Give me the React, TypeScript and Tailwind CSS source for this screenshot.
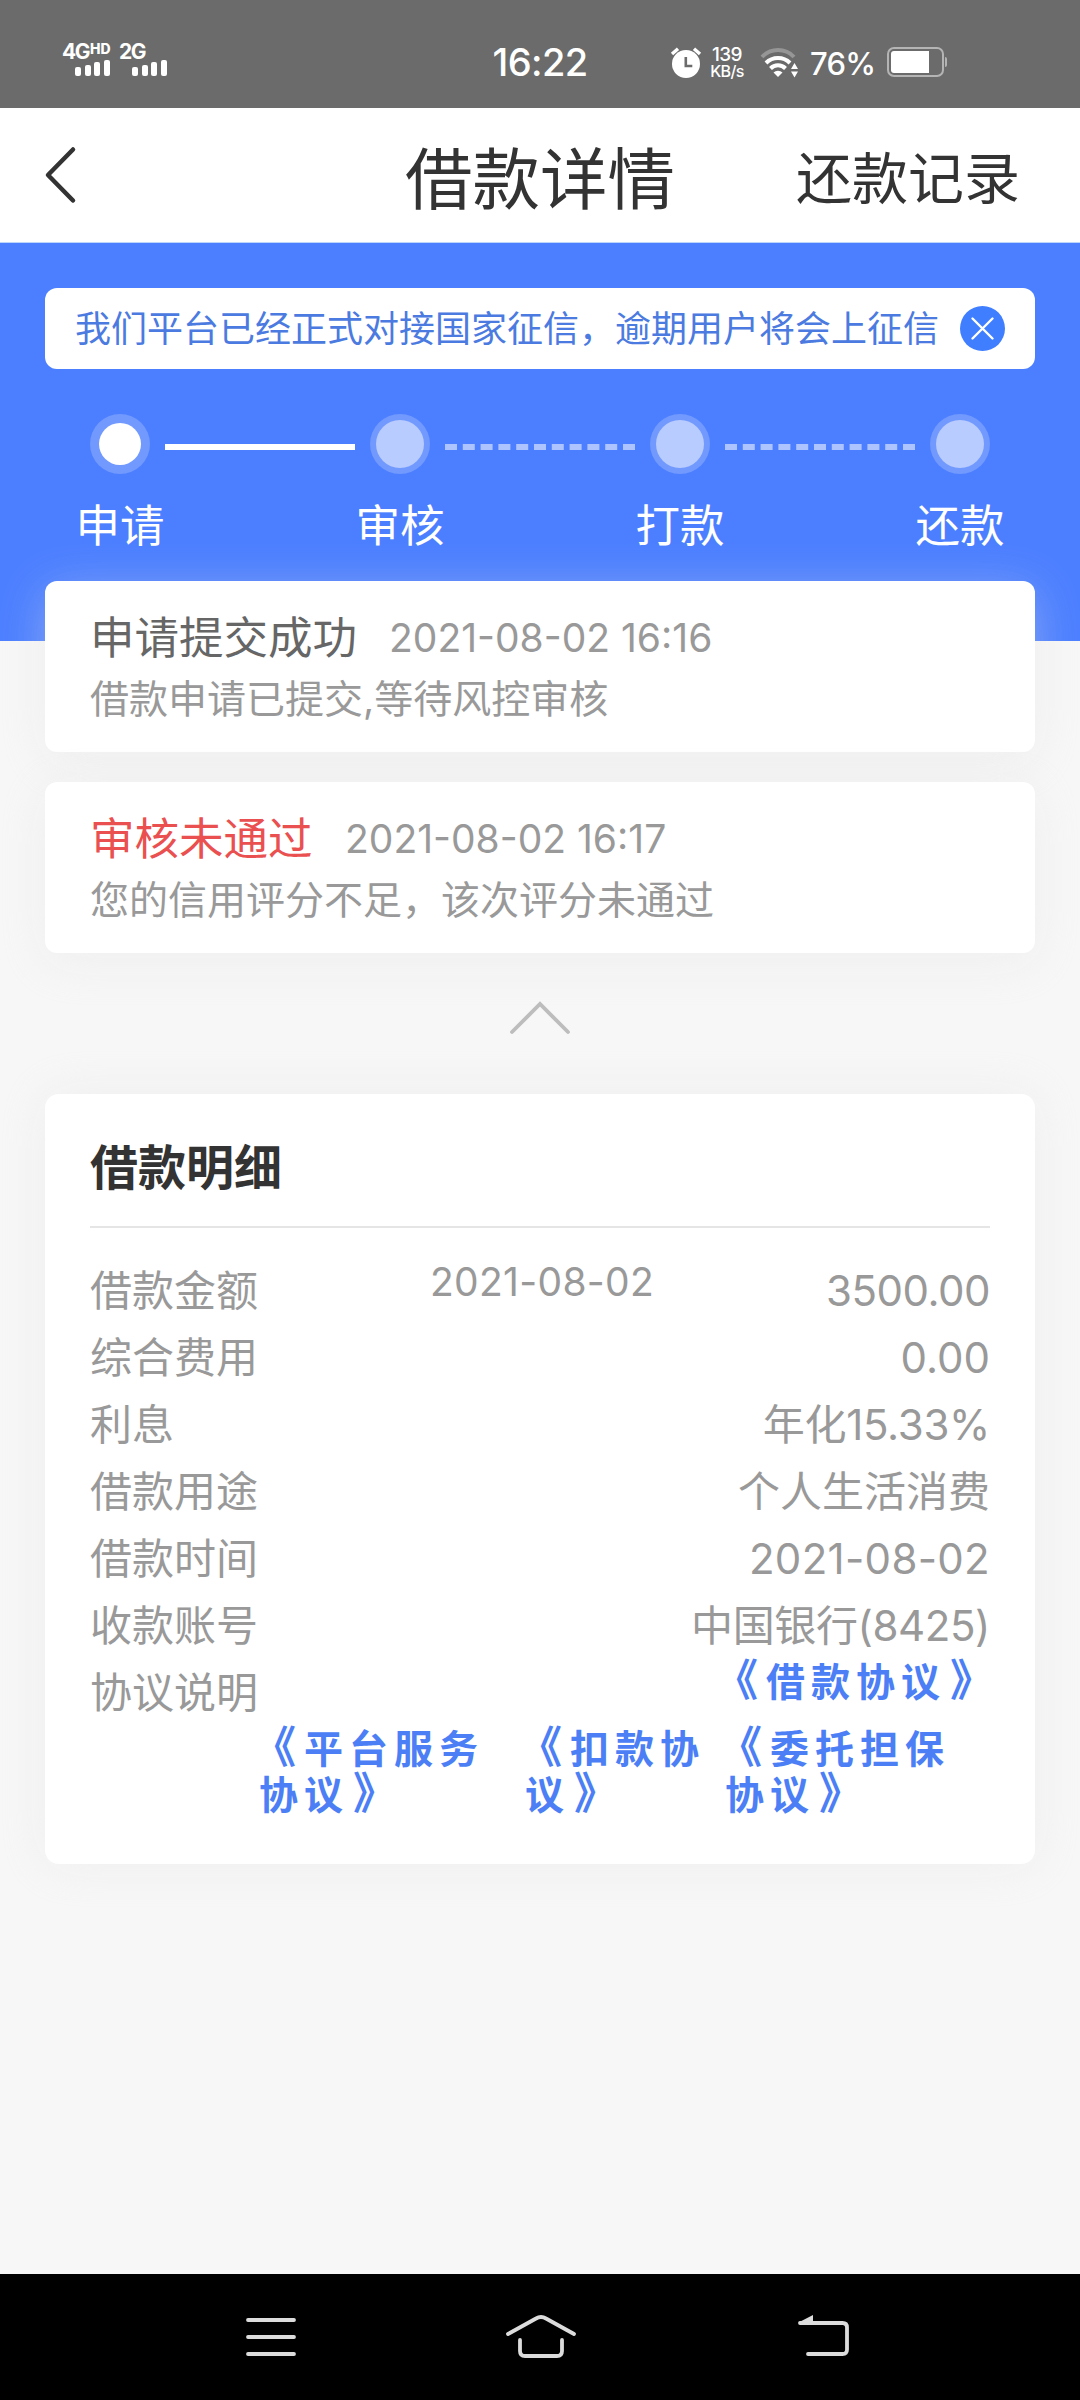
import { Fragment } from "react";

const steps = [
  { label: "申请", done: true },
  { label: "审核", done: false },
  { label: "打款", done: false },
  { label: "还款", done: false },
];

const logs = [
  {
    title: "申请提交成功",
    time: "2021-08-02 16:16",
    text: "借款申请已提交,等待风控审核",
    failed: false,
  },
  {
    title: "审核未通过",
    time: "2021-08-02 16:17",
    text: "您的信用评分不足，该次评分未通过",
    failed: true,
  },
];

const details = [
  { label: "借款金额", value: "3500.00", spacing: "tracking-[-0.5px]" },
  { label: "综合费用", value: "0.00", spacing: "tracking-[0px]" },
  { label: "利息", value: "年化15.33%", spacing: "tracking-[-0.3px]" },
  { label: "借款用途", value: "个人生活消费", spacing: "tracking-[0px]" },
  { label: "借款时间", value: "2021-08-02", spacing: "tracking-[0.3px]" },
  { label: "收款账号", value: "中国银行(8425)", spacing: "tracking-[-0.4px]" },
];

function Signal({ name, hd }: { name: string; hd?: boolean }) {
  return (
    <div className="w-[57px]">
      <div className="flex h-[16px] items-start text-[21px] leading-[16px] font-bold tracking-[-1.5px]">
        {name}
        {hd && (
          <span className="ml-px text-[14px] leading-[10px] font-extrabold tracking-[0px]">
            HD
          </span>
        )}
      </div>
      <div className="ml-[13px] flex h-[16px] w-[35px] items-end justify-between">
        <span className="h-[9px] w-[6px] rounded-[2px] bg-white" />
        <span className="h-[11px] w-[6px] rounded-[2px] bg-white" />
        <span className="h-[14px] w-[6px] rounded-[2px] bg-white" />
        <span className="h-[16px] w-[6px] rounded-[2px] bg-white" />
      </div>
    </div>
  );
}

function StatusBar() {
  return (
    <div className="flex h-[108px] shrink-0 bg-[#6b6b6b] text-white">
      <div className="flex w-[430px] pt-[44px] pl-[62px]">
        <Signal name="4G" hd />
        <Signal name="2G" />
      </div>

      <div className="w-[220px] pt-[40px] text-center text-[38px] leading-[44px] font-medium tracking-[-0.6px]">
        16:22
      </div>

      <div className="flex flex-1 pl-[20px]">
        <svg className="mt-[47px] h-[32px] w-[32px]" viewBox="0 0 32 32">
          <circle cx="16" cy="17" r="14" fill="#fff" />
          <path d="M2 7 8 1.800M30 7 24 1.800" stroke="#fff" strokeWidth="3.4" />
          <path d="M15.8 10v9h6.500" stroke="#6b6b6b" strokeWidth="2.6" fill="none" />
        </svg>

        <div className="mt-[46px] ml-[6px] w-[38px] text-center font-medium">
          <p className="text-[19px] leading-[17px] tracking-[-0.6px]">139</p>
          <p className="text-[16px] leading-[17px] tracking-[-0.6px]">KB/s</p>
        </div>

        <svg className="mt-[47px] ml-[14px] h-[32px] w-[42px]" viewBox="0 0 42 32">
          <g fill="none" stroke="#fff" strokeWidth="4">
            <path d="M2 10a22 22 0 0 1 32 0" stroke="#969696" />
            <path d="M6 16a17 17 0 0 1 24 0" />
            <path d="M10.500 21.500a10.500 10.500 0 0 1 15 0" />
          </g>
          <path d="M13.500 25.500a6.500 6.500 0 0 1 9 0L18 30z" fill="#fff" />
          <path d="M31 22h7L34.500 16zM31 24.500h7L34.500 30.500z" fill="#fff" />
        </svg>

        <span className="mt-[44px] ml-[8px] w-[70px] text-[31px] leading-[40px] font-medium tracking-[-0.8px]">
          76%
        </span>

        <div className="mt-[47px] ml-[7px] flex h-[30px] w-[57px] rounded-[7px] border-2 border-[#b4b4b4] p-[2px]">
          <span className="w-[38px] rounded-l-[3px] bg-white" />
        </div>
        <span className="mt-[57px] ml-px h-[10px] w-[2px] rounded-r-[2px] bg-[#b4b4b4]" />
      </div>
    </div>
  );
}

function Header() {
  return (
    <header className="flex h-[135px] shrink-0 items-center justify-between border-b border-[#bcd6fb] bg-white text-[#333]">
      <div className="w-[284px] pl-[44px]">
        <svg className="h-[58px] w-[34px]" viewBox="0 0 34 58" fill="none">
          <path
            d="M29 3.500 4 29l25 25.500"
            stroke="#333"
            strokeWidth="4.500"
            strokeLinecap="round"
            strokeLinejoin="round"
          />
        </svg>
      </div>
      <h1 className="mt-[10px] text-[67.5px] leading-[80px]">借款详情</h1>
      <div className="mt-[8px] w-[284px] pr-[60px] text-right text-[56px] leading-[70px] whitespace-nowrap">
        还款记录
      </div>
    </header>
  );
}

function Progress() {
  return (
    <section className="h-[398px] shrink-0 bg-[#4c7fff] px-[45px] pt-[45px]">
      <div className="flex h-[81px] items-center justify-between rounded-[12px] bg-white px-[30px]">
        <span className="text-[36px] leading-[50px] whitespace-nowrap text-[#4b7ae0]">
          我们平台已经正式对接国家征信，逾期用户将会上征信
        </span>
        <svg className="h-[45px] w-[45px]" viewBox="0 0 45 45">
          <circle cx="22.500" cy="22.500" r="22.500" fill="#3f7eff" />
          <path
            d="m12.500 12.500 20 20M32.500 12.500l-20 20"
            stroke="#fff"
            strokeWidth="2.400"
            strokeLinecap="round"
          />
        </svg>
      </div>

      <div className="mt-[45px] flex px-[30px]">
        {steps.map((step, i) => (
          <Fragment key={step.label}>
            {i > 0 && (
              <div
                className={
                  i === 1
                    ? "mt-[30px] h-0 w-[190px] shrink-0 border-t-[6px] border-white"
                    : "mt-[30px] h-0 w-[190px] shrink-0 border-t-[6px] border-dashed border-[#aec4ff]"
                }
              />
            )}
            <div className="flex w-[90px] shrink-0 flex-col items-center">
              <div className="flex size-[60px] items-center justify-center rounded-full bg-[#7199fe]">
                <span
                  className={
                    step.done
                      ? "size-[42px] rounded-full bg-white"
                      : "size-[48px] rounded-full bg-[#b9ccff]"
                  }
                />
              </div>
              <span className="mt-[22px] text-[44.5px] leading-[60px] whitespace-nowrap text-white">
                {step.label}
              </span>
            </div>
          </Fragment>
        ))}
      </div>
    </section>
  );
}

// The title marks are drawn larger than the name they enclose
function Agreement({ name, rest }: { name: string; rest?: string }) {
  return (
    <>
      <span className="mr-[2px] -ml-[7px] text-[44px] leading-[30px]">《</span>
      {name}
      {rest && (
        <>
          <br />
          {rest}
        </>
      )}
      <span className="-mr-[9px] ml-[4px] text-[44px] leading-[30px]">》</span>
    </>
  );
}

export default function App() {
  return (
    <div className="flex h-[2400px] w-[1080px] flex-col overflow-hidden bg-[#f7f7f7] font-['Inter','Noto_Sans_CJK_SC',sans-serif]">
      <StatusBar />
      <Header />
      <Progress />

      <main className="relative -mt-[60px] flex-1 px-[45px]">
        <div className="space-y-[30px]">
          {logs.map((log) => (
            <div
              key={log.title}
              className="h-[171px] rounded-[12px] bg-white px-[45px] pt-[27px] shadow-[0_9px_48px_rgba(228,228,228,0.4)]"
            >
              <div className="flex items-center leading-[60px]">
                <span
                  className={
                    log.failed
                      ? "w-[221px] text-[44.5px] whitespace-nowrap text-[#e9504f]"
                      : "w-[265px] text-[44.5px] whitespace-nowrap text-[#666]"
                  }
                >
                  {log.title}
                </span>
                <span className="ml-[34px] text-[39px] text-[#999]">
                  {log.time}
                </span>
              </div>
              <p className="text-[39px] leading-[61px] text-[#999]">
                {log.text}
              </p>
            </div>
          ))}
        </div>

        <div className="flex h-[141px] justify-center pt-[47px]">
          <svg className="h-[36px] w-[62px]" viewBox="0 0 62 36" fill="none">
            <path d="M3 32 31 4l28 28" stroke="#bdbdbd" strokeWidth="3.800" strokeLinecap="round" />
          </svg>
        </div>

        <section className="relative h-[770px] rounded-[14px] bg-white px-[45px] shadow-[0_0_48px_rgba(228,228,228,0.4)]">
          <h2 className="h-[134px] border-b-2 border-[#e5e5e5] pt-[39px] text-[48px] leading-[70px] font-bold text-[#333]">
            借款明细
          </h2>
          <span className="absolute top-[163px] left-[385px] text-[39px] leading-[50px] tracking-[0.3px] text-[#999]">
            2021-08-02
          </span>

          <div className="pt-[29px] text-[42px] leading-[67px] text-[#999]">
            {details.map((row) => (
              <div key={row.label} className="flex justify-between">
                <span>{row.label}</span>
                <span className={row.spacing}>{row.value}</span>
              </div>
            ))}

            <div className="flex h-[67px] justify-between whitespace-nowrap">
              <span>协议说明</span>
              <a className="-mt-[11px] w-[269px] text-[39px] font-bold tracking-[6px] text-[#4c7ff5]">
                <Agreement name="借款协议" />
              </a>
            </div>
          </div>

          <div className="ml-[169px] flex text-[39px] leading-[46px] font-bold tracking-[6px] whitespace-nowrap text-[#4c7ff5]">
            <a className="w-[266px]">
              <Agreement name="平台服务" rest="协议" />
            </a>
            <a className="w-[200px]">
              <Agreement name="扣款协" rest="议" />
            </a>
            <a>
              <Agreement name="委托担保" rest="协议" />
            </a>
          </div>
        </section>
      </main>

      <nav className="flex h-[126px] shrink-0 bg-black">
        <svg className="h-[126px] w-[1080px]" viewBox="0 0 1080 126" fill="none" stroke="#dcdcdc" strokeWidth="3.800" strokeLinecap="round">
          <path d="M248 46h46M248 63h46M248 80h46" />
          <path d="M508 60 536 44.500q5-3 10 0L574 60" />
          <path d="M520 66v11q0 5 5 5h32q5 0 5-5V66" />
          <path d="M808 80h34.500q4.500 0 4.500-4.500v-22q0-4.500-4.500-4.500H800" />
          <path d="M798.500 48.500 813 41v9z" fill="#dcdcdc" stroke="none" />
        </svg>
      </nav>
    </div>
  );
}
